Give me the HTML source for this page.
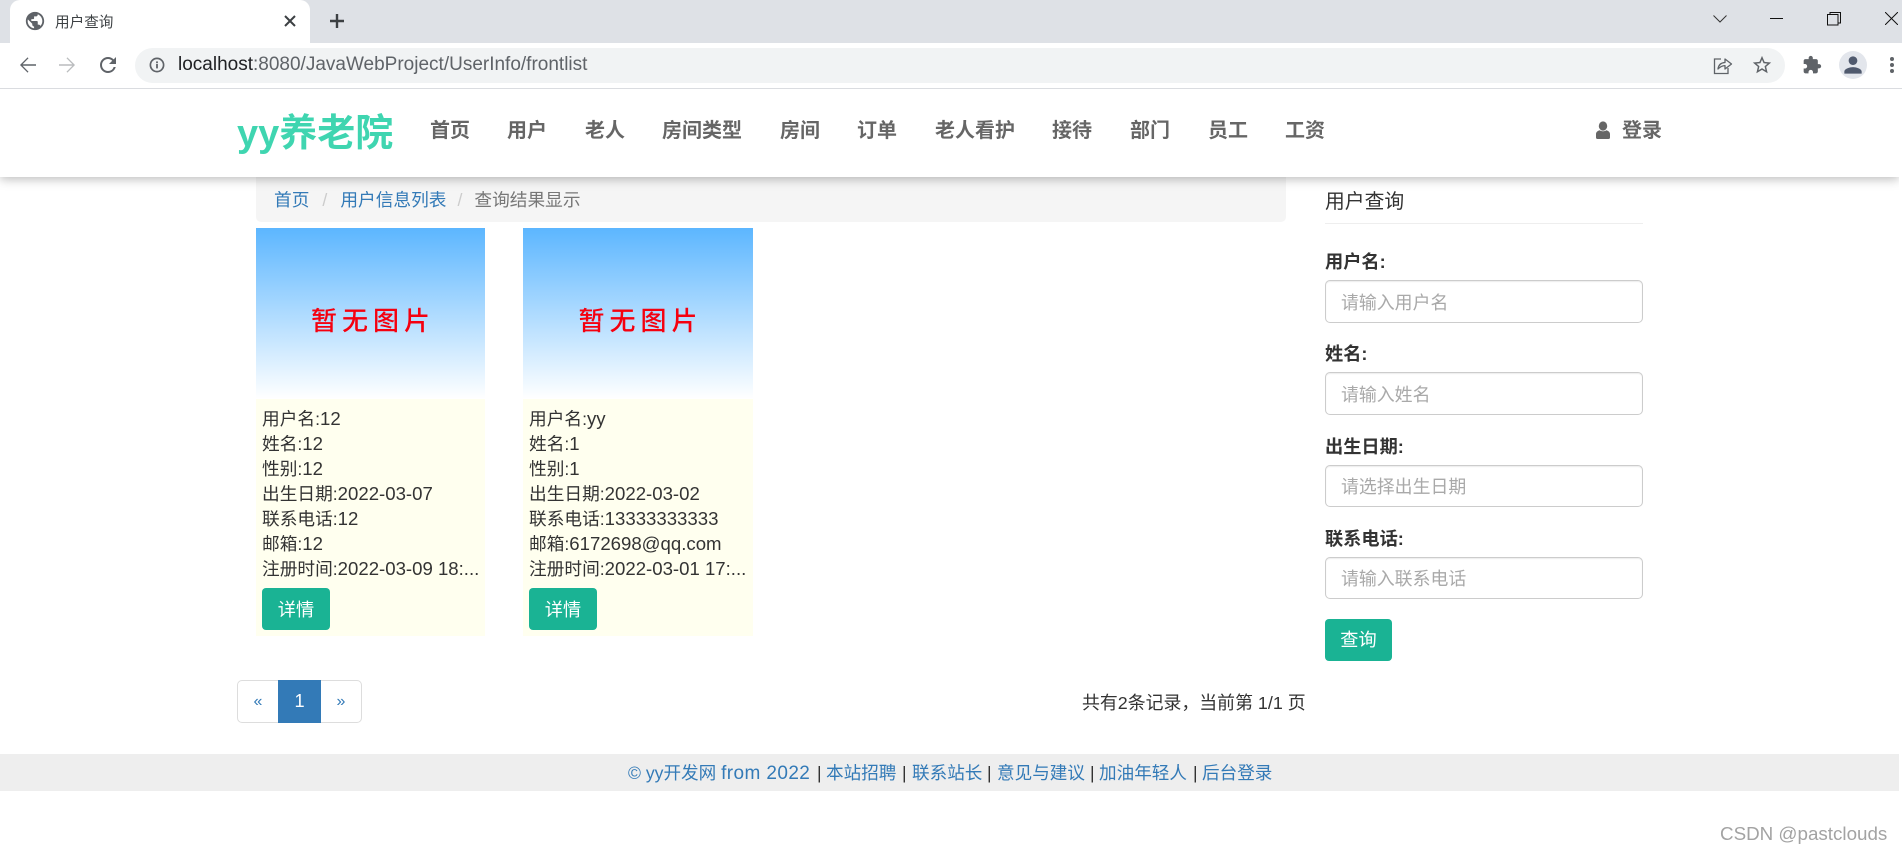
<!DOCTYPE html>
<html lang="zh">
<head>
<meta charset="utf-8">
<title>用户查询</title>
<style>
html,body{margin:0;padding:0;background:#fff;}
body{position:relative;width:1902px;height:853px;overflow:hidden;font-family:"Liberation Sans","Noto Sans CJK SC",sans-serif;color:#333;font-size:18.2px;}
.a{position:absolute;white-space:nowrap;}
a{color:#337ab7;text-decoration:none;}
svg{position:absolute;display:block;}
.nav{position:absolute;top:117px;line-height:28px;font-size:20px;font-weight:bold;color:#666;white-space:nowrap;}
.card-img{position:absolute;top:228px;height:171px;background:linear-gradient(#5cb6ff,#fff);}
.card-img span{position:absolute;left:0;right:0;text-align:center;top:74px;line-height:38px;font-size:26px;font-weight:500;letter-spacing:5px;color:#f5000f;text-indent:5px;}
.info{position:absolute;top:399px;height:237px;background:#ffffef;}
.ln{position:absolute;left:6px;line-height:25px;white-space:nowrap;color:#333;font-size:17.7px;}
.ln i{font-style:normal;font-size:18.6px;}
.btn{position:absolute;background:#1ab394;color:#fff;border-radius:4px;text-align:center;font-size:18.2px;}
.lbl{position:absolute;left:1325px;font-weight:bold;line-height:24px;color:#333;white-space:nowrap;}
.inp{position:absolute;left:1325px;width:316px;border:1px solid #ccc;border-radius:5px;box-shadow:inset 0 1px 1px rgba(0,0,0,.075);color:#a9a9a9;text-indent:15px;box-sizing:content-box;font-size:17.9px;}
.ft{position:absolute;top:760px;line-height:26px;white-space:nowrap;font-size:17.6px;color:#333;}
</style>
</head>
<body>
<!-- browser chrome -->
<div class="a" style="left:0;top:0;width:1902px;height:43px;background:#dee1e6;"></div>
<div class="a" style="left:10px;top:0;width:300px;height:43px;background:#fff;border-radius:10px 10px 0 0;"></div>
<svg style="left:24px;top:10px" width="22" height="22" viewBox="0 0 24 24"><path fill="#5f6368" d="M12 2C6.48 2 2 6.48 2 12s4.48 10 10 10 10-4.48 10-10S17.52 2 12 2zm-1 17.93c-3.95-.49-7-3.85-7-7.93 0-.62.08-1.21.21-1.79L9 15v1c0 1.1.9 2 2 2v1.93zm6.9-2.54c-.26-.81-1-1.39-1.9-1.39h-1v-3c0-.55-.45-1-1-1H8v-2h2c.55 0 1-.45 1-1V7h2c1.1 0 2-.9 2-2v-.41c2.93 1.19 5 4.06 5 7.41 0 2.08-.8 3.97-2.1 5.39z"/></svg>
<div class="a" style="left:55px;top:12px;font-size:14.6px;line-height:22px;color:#3c4043;">用户查询</div>
<svg style="left:284px;top:15px" width="12" height="12" viewBox="0 0 12 12"><path d="M1 1L11 11M11 1L1 11" stroke="#3c4043" stroke-width="2"/></svg>
<svg style="left:329px;top:13px" width="16" height="16" viewBox="0 0 16 16"><path d="M8 1V15M1 8H15" stroke="#3c4043" stroke-width="2.4"/></svg>
<svg style="left:1713px;top:15px" width="14" height="8" viewBox="0 0 14 8"><path d="M.5 .5L7 7L13.5 .5" fill="none" stroke="#333" stroke-width="1"/></svg>
<div class="a" style="left:1770px;top:18px;width:13px;height:1px;background:#111;"></div>
<svg style="left:1827px;top:12px" width="14" height="14" viewBox="0 0 14 14"><rect x=".5" y="2.5" width="10.5" height="10.5" fill="none" stroke="#111"/><path d="M3 2.5V.5H13.5V11H11" fill="none" stroke="#111"/></svg>
<svg style="left:1885px;top:12px" width="13" height="13" viewBox="0 0 13 13"><path d="M0 0L13 13M13 0L0 13" stroke="#111" stroke-width="1"/></svg>

<div class="a" style="left:0;top:43px;width:1902px;height:45px;background:#fff;"></div>
<div class="a" style="left:0;top:88px;width:1902px;height:1px;background:#dadce0;"></div>
<svg style="left:16px;top:53px" width="24" height="24" viewBox="0 0 24 24"><path fill="#5f6368" d="M20 11.2H6.6l5.9-5.9L11.6 4.4 4 12l7.6 7.6.9-.9-5.9-5.9H20v-1.6z"/></svg>
<svg style="left:55px;top:53px;transform:scaleX(-1)" width="24" height="24" viewBox="0 0 24 24"><path fill="#babcbe" d="M20 11.2H6.6l5.9-5.9L11.6 4.4 4 12l7.6 7.6.9-.9-5.9-5.9H20v-1.6z"/></svg>
<svg style="left:96px;top:53px" width="24" height="24" viewBox="0 0 24 24"><path fill="#5f6368" d="M17.65 6.35A7.958 7.958 0 0 0 12 4c-4.42 0-7.99 3.58-7.99 8s3.57 8 7.99 8c3.73 0 6.84-2.55 7.73-6h-2.08A5.99 5.99 0 0 1 12 18c-3.31 0-6-2.69-6-6s2.69-6 6-6c1.66 0 3.14.69 4.22 1.78L13 11h7V4l-2.35 2.35z"/></svg>
<div class="a" style="left:135px;top:48px;width:1650px;height:35px;background:#f1f3f4;border-radius:18px;"></div>
<svg style="left:149px;top:57px" width="16" height="16" viewBox="0 0 16 16"><circle cx="8" cy="8" r="6.6" fill="none" stroke="#5f6368" stroke-width="1.7"/><rect x="7.1" y="7" width="1.8" height="4.4" fill="#5f6368"/><rect x="7.1" y="4.4" width="1.8" height="1.8" fill="#5f6368"/></svg>
<div class="a" style="left:178px;top:53px;line-height:24px;font-size:19px;color:#5f6368;"><span style="color:#202124">localhost</span>:8080/JavaWebProject/UserInfo/frontlist</div>
<svg style="left:1713px;top:56px" width="20" height="19" viewBox="0 0 20 19"><path d="M8 3H1.5V17.5H15V12" fill="none" stroke="#5f6368" stroke-width="1.3"/><path d="M5 13C5.5 9 8 6.7 12 6.5V3L18.5 8L12 13V9.6C9 9.7 7 10.8 5 13Z" fill="none" stroke="#5f6368" stroke-width="1.3" stroke-linejoin="round"/></svg>
<svg style="left:1751px;top:54px" width="22" height="22" viewBox="0 0 24 24"><path fill="#5f6368" d="M22 9.24l-7.19-.62L12 2 9.19 8.63 2 9.24l5.46 4.73L5.82 21 12 17.27 18.18 21l-1.63-7.03L22 9.24zM12 15.4l-3.76 2.27 1-4.28-3.32-2.88 4.38-.38L12 6.1l1.71 4.04 4.38.38-3.32 2.88 1 4.28L12 15.4z"/></svg>
<svg style="left:1802px;top:55px" width="20" height="20" viewBox="0 0 24 24"><path fill="#5f6368" d="M20.5 11H19V7c0-1.1-.9-2-2-2h-4V3.5C13 2.12 11.88 1 10.5 1S8 2.12 8 3.5V5H4c-1.1 0-1.99.9-1.99 2v3.8H3.5c1.49 0 2.7 1.21 2.7 2.7s-1.21 2.7-2.7 2.7H2V20c0 1.1.9 2 2 2h3.8v-1.5c0-1.49 1.21-2.7 2.7-2.7 1.49 0 2.7 1.21 2.7 2.7V22H17c1.1 0 2-.9 2-2v-4h1.5c1.38 0 2.5-1.12 2.5-2.5S21.88 11 20.5 11z"/></svg>
<div class="a" style="left:1839px;top:51px;width:28px;height:28px;border-radius:50%;background:#e3e6ec;"></div>
<svg style="left:1840px;top:52px" width="26" height="26" viewBox="0 0 24 24"><path fill="#505a6e" d="M12 12c2.21 0 4-1.79 4-4s-1.79-4-4-4-4 1.79-4 4 1.79 4 4 4zm0 2c-2.67 0-8 1.34-8 4v2h16v-2c0-2.66-5.33-4-8-4z"/></svg>
<svg style="left:1889px;top:56px" width="6" height="18" viewBox="0 0 6 18"><circle cx="3" cy="3" r="2" fill="#5f6368"/><circle cx="3" cy="9" r="2" fill="#5f6368"/><circle cx="3" cy="15" r="2" fill="#5f6368"/></svg>

<!-- breadcrumb -->
<div class="a" style="left:256px;top:172px;width:1030px;height:50px;background:#f5f5f5;border-radius:0 0 5px 5px;"></div>
<div class="a" style="left:274px;top:187px;line-height:26px;font-size:17.7px;"><a href="#">首页</a><span style="color:#ccc;padding:0 13px;">/</span><a href="#">用户信息列表</a><span style="color:#ccc;padding:0 12px 0 11px;">/</span><span style="color:#777">查询结果显示</span></div>

<!-- header -->
<div class="a" style="left:0;top:89px;width:1899px;height:88px;background:#fff;box-shadow:0 2px 10px rgba(0,0,0,.28);z-index:3;clip-path:inset(0 0 -30px 0);"></div>
<div style="position:absolute;left:0;top:0;z-index:4;">
<div class="a" style="left:237px;top:110px;line-height:48px;font-size:38px;font-weight:bold;color:#3fd5b0;letter-spacing:0;">yy养老院</div>
<div class="nav" style="left:430px;">首页</div>
<div class="nav" style="left:507px;">用户</div>
<div class="nav" style="left:585px;">老人</div>
<div class="nav" style="left:662px;">房间类型</div>
<div class="nav" style="left:780px;">房间</div>
<div class="nav" style="left:857px;">订单</div>
<div class="nav" style="left:935px;">老人看护</div>
<div class="nav" style="left:1052px;">接待</div>
<div class="nav" style="left:1130px;">部门</div>
<div class="nav" style="left:1208px;">员工</div>
<div class="nav" style="left:1285px;">工资</div>
<svg style="left:1596px;top:121px" width="14" height="18" viewBox="0 0 14 18"><ellipse cx="7" cy="5" rx="4.2" ry="4.6" fill="#666"/><path d="M0 16.5V13C0 10.8 2 9.8 3.6 9.2C5.6 10.6 8.4 10.6 10.4 9.2C12 9.8 14 10.8 14 13V16.5C14 17.4 13.4 18 12.5 18H1.5C.6 18 0 17.4 0 16.5Z" fill="#666"/></svg>
<div class="nav" style="left:1622px;">登录</div>
</div>

<!-- cards -->
<div class="card-img" style="left:256px;width:229px;"><span>暂无图片</span></div>
<div class="info" style="left:256px;width:229px;">
<div class="ln" style="top:7px">用户名:<i>12</i></div>
<div class="ln" style="top:32px">姓名:<i>12</i></div>
<div class="ln" style="top:57px">性别:<i>12</i></div>
<div class="ln" style="top:82px">出生日期:<i>2022-03-07</i></div>
<div class="ln" style="top:107px">联系电话:<i>12</i></div>
<div class="ln" style="top:132px">邮箱:<i>12</i></div>
<div class="ln" style="top:157px">注册时间:<i>2022-03-09 18:...</i></div>
<div class="btn" style="left:6px;top:189px;width:68px;height:42px;line-height:44px;">详情</div>
</div>
<div class="card-img" style="left:523px;width:230px;"><span>暂无图片</span></div>
<div class="info" style="left:523px;width:230px;">
<div class="ln" style="top:7px">用户名:<i>yy</i></div>
<div class="ln" style="top:32px">姓名:<i>1</i></div>
<div class="ln" style="top:57px">性别:<i>1</i></div>
<div class="ln" style="top:82px">出生日期:<i>2022-03-02</i></div>
<div class="ln" style="top:107px">联系电话:<i>13333333333</i></div>
<div class="ln" style="top:132px">邮箱:<i>6172698@qq.com</i></div>
<div class="ln" style="top:157px">注册时间:<i>2022-03-01 17:...</i></div>
<div class="btn" style="left:6px;top:189px;width:68px;height:42px;line-height:44px;">详情</div>
</div>

<!-- pagination -->
<div class="a" style="left:237px;top:680px;width:123px;height:41px;border:1px solid #ddd;border-radius:5px;"></div>
<div class="a" style="left:278px;top:680px;width:43px;height:43px;background:#337ab7;color:#fff;text-align:center;line-height:43px;">1</div>
<div class="a" style="left:238px;top:680px;width:40px;text-align:center;line-height:43px;color:#337ab7;font-size:16px;">«</div>
<div class="a" style="left:321px;top:680px;width:40px;text-align:center;line-height:43px;color:#337ab7;font-size:16px;">»</div>
<div class="a" style="left:1082px;top:690px;line-height:26px;color:#333;font-size:17.9px;">共有2条记录，当前第 1/1 页</div>

<!-- sidebar -->
<div class="a" style="left:1325px;top:188px;line-height:28px;font-size:19.8px;color:#333;">用户查询</div>
<div class="a" style="left:1325px;top:223px;width:318px;height:1px;background:#eee;"></div>
<div class="lbl" style="top:250px;">用户名:</div>
<div class="inp" style="top:280px;height:41px;line-height:44px;">请输入用户名</div>
<div class="lbl" style="top:342px;">姓名:</div>
<div class="inp" style="top:372px;height:41px;line-height:44px;">请输入姓名</div>
<div class="lbl" style="top:435px;">出生日期:</div>
<div class="inp" style="top:465px;height:40px;line-height:43px;">请选择出生日期</div>
<div class="lbl" style="top:527px;">联系电话:</div>
<div class="inp" style="top:557px;height:40px;line-height:43px;">请输入联系电话</div>
<div class="btn" style="left:1325px;top:619px;width:67px;height:42px;line-height:43px;">查询</div>

<!-- footer -->
<div class="a" style="left:0;top:754px;width:1899px;height:37px;background:#eee;"></div>
<div class="ft" style="left:628px;"><a href="#">© yy开发网 <span style="font-size:19px;letter-spacing:.4px">from 2022</span></a></div>
<div class="ft" style="left:817px;">|</div>
<div class="ft" style="left:826px;"><a href="#">本站招聘</a></div>
<div class="ft" style="left:902px;">|</div>
<div class="ft" style="left:912px;"><a href="#">联系站长</a></div>
<div class="ft" style="left:987px;">|</div>
<div class="ft" style="left:997px;"><a href="#">意见与建议</a></div>
<div class="ft" style="left:1090px;">|</div>
<div class="ft" style="left:1099px;"><a href="#">加油年轻人</a></div>
<div class="ft" style="left:1193px;">|</div>
<div class="ft" style="left:1202px;"><a href="#">后台登录</a></div>

<div class="a" style="left:1720px;top:822px;line-height:24px;font-size:18.8px;color:#a3a3a3;">CSDN @pastclouds</div>
</body>
</html>
